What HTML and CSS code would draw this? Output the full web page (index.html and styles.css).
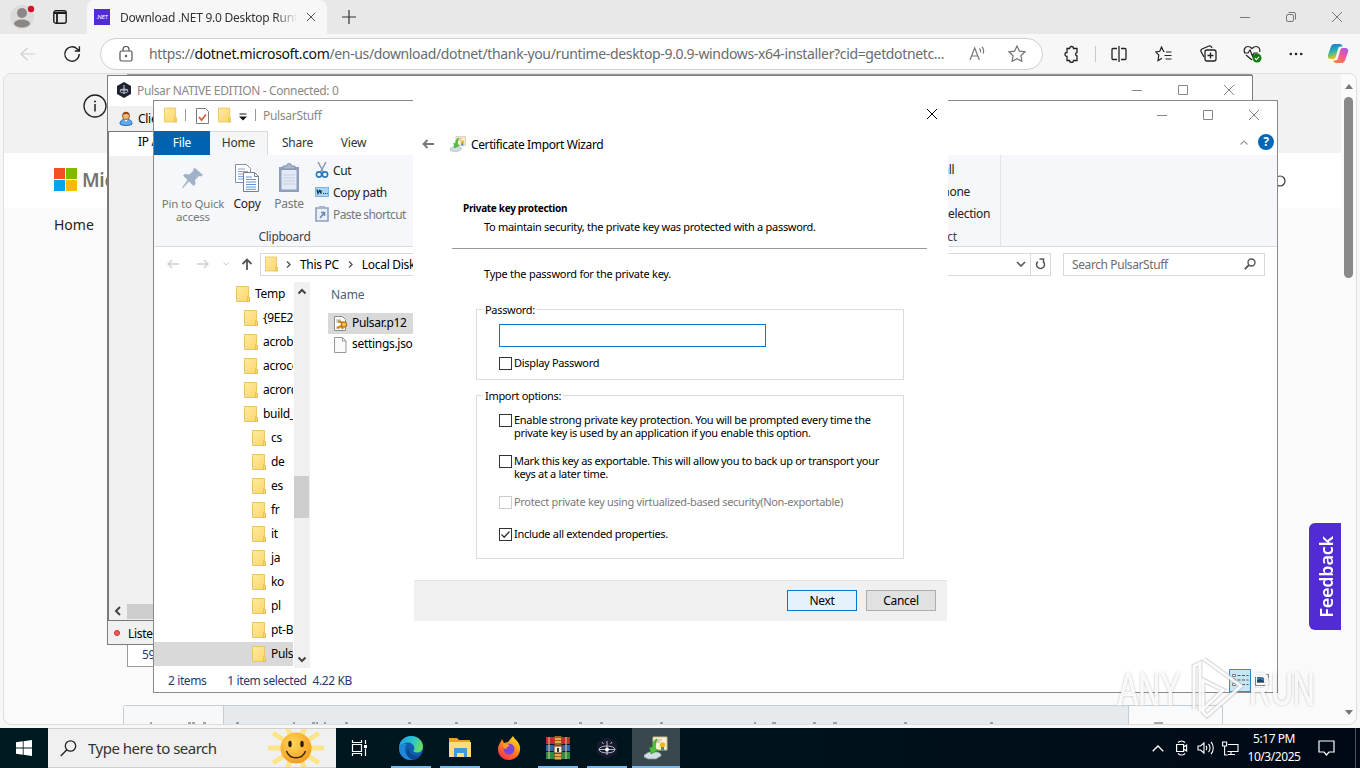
FILE: index.html
```html
<!DOCTYPE html>
<html lang="en">
<head>
  <meta charset="UTF-8">
  <meta name="viewport" content="width=device-width, initial-scale=1.0">
  <title>Desktop</title>
  <link rel="stylesheet" href="styles.css">
</head>
<body>
  <!-- Shared icons -->
  <svg class="defs" width="0" height="0">
    <defs>
      <linearGradient id="gFolder" x1="0" y1="0" x2="1" y2="1"><stop offset="0" stop-color="#ffe9a3"/><stop offset="1" stop-color="#fbd567"/></linearGradient>
      <linearGradient id="gEdge" x1="0" y1="0" x2="1" y2="0.3"><stop offset="0" stop-color="#1b9de2"/><stop offset="0.6" stop-color="#2bc3d2"/><stop offset="1" stop-color="#62dc67"/></linearGradient>
      <linearGradient id="gFox" x1="0.8" y1="0" x2="0.2" y2="1"><stop offset="0" stop-color="#ffe226"/><stop offset="0.45" stop-color="#ff8a16"/><stop offset="1" stop-color="#ff2a55"/></linearGradient>
      <linearGradient id="gCopA" x1="0" y1="0" x2="0.3" y2="1"><stop offset="0" stop-color="#1a6ee0"/><stop offset="0.55" stop-color="#2bb3a8"/><stop offset="1" stop-color="#f2c320"/></linearGradient>
      <linearGradient id="gCopB" x1="1" y1="0" x2="0.3" y2="1"><stop offset="0" stop-color="#9a5bf0"/><stop offset="0.5" stop-color="#ea5a9c"/><stop offset="1" stop-color="#fd7a45"/></linearGradient>
      <radialGradient id="gSun" cx="0.4" cy="0.35" r="0.7"><stop offset="0" stop-color="#ffd75a"/><stop offset="1" stop-color="#f39a1c"/></radialGradient>
      <symbol id="folder" viewBox="0 0 14 16"><path d="M.5.5h12v10l1 1v4H.5z" fill="url(#gFolder)" stroke="#e9c766"/><path d="M11.5 10.5v5h2v-4z" fill="#f7d774" stroke="#dfb94f" stroke-width=".7"/></symbol>
      <symbol id="min" viewBox="0 0 12 12"><path d="M1 6.5h10" stroke="currentColor" fill="none"/></symbol>
      <symbol id="max" viewBox="0 0 12 12"><path d="M1.500 1.500h9v9h-9z" stroke="currentColor" fill="none"/></symbol>
      <symbol id="close" viewBox="0 0 12 12"><path d="M1 1l10 10M11 1L1 11" stroke="currentColor" fill="none"/></symbol>
      <symbol id="cert" viewBox="0 0 24 24"><path d="M9 1h14v13H9z" fill="#f6f1d8" stroke="#c9b987"/><path d="M11 4h7M11 6h5" stroke="#b3a678"/><circle cx="18.500" cy="9" r="2.700" fill="#f0b429"/><path d="M17 11v4l1.500-1 1.500 1v-4z" fill="#4c7fd0"/><path d="M0 19l5-3h9l3 2v2l-5 3H4l-4-2z" fill="#d3dee0" stroke="#7c9297" stroke-width=".7"/><path d="M13 3C9 5 8 8 8.500 11.500l-3-.5 1.500 7 7-4-2.500-1C11 10 11.500 6 13 3z" fill="#4fc23a" stroke="#2c8d23" stroke-width=".6"/></symbol>
    </defs>
  </svg>

  <!-- Browser -->
  <div class="browser">
    <div class="tab-strip">
      <svg class="avatar" width="26" height="26" viewBox="0 0 26 26"><circle cx="12" cy="13" r="12" fill="#dcdbda"/><circle cx="12" cy="9" r="5" fill="#8b8784"/><ellipse cx="12" cy="19.500" rx="8" ry="4" fill="#8b8784"/><circle cx="21" cy="5" r="3.200" fill="#d4102b"/></svg>
      <svg class="tab-actions" width="14" height="14" viewBox="0 0 14 14"><rect x=".8" y=".8" width="12.400" height="12.400" rx="2" fill="none" stroke="#1b1b1b" stroke-width="1.400"/><path d="M1 3h12M4 3v10" stroke="#1b1b1b" stroke-width="1.800"/></svg>
      <div class="tab">
        <span class="net-logo">.NET</span>
        <span class="tab-title">Download .NET 9.0 Desktop Runtime</span>
        <svg width="10" height="10" viewBox="0 0 12 12" class="tab-close"><use href="#close"/></svg>
      </div>
      <svg class="new-tab" width="14" height="14" viewBox="0 0 14 14"><path d="M7 0v14M0 7h14" stroke="#333" stroke-width="1.200"/></svg>
      <div class="win-controls browser-controls">
        <svg width="12" height="12"><use href="#min"/></svg>
        <svg width="12" height="12" viewBox="0 0 12 12"><rect x="1.500" y="3.500" width="7" height="7" rx="1.500" fill="none" stroke="#777"/><path d="M3.500 1.500H9a1.500 1.500 0 0 1 1.500 1.500v5.500" fill="none" stroke="#777"/></svg>
        <svg width="12" height="12"><use href="#close"/></svg>
      </div>
    </div>
    <div class="toolbar">
      <svg class="nav-back" width="16" height="14" viewBox="0 0 16 14"><path d="M15.500 7H1M7.500 .8L1 7l6.500 6.200" fill="none" stroke="#cfcfcf" stroke-width="1.200"/></svg>
      <svg class="nav-reload" width="18" height="18" viewBox="0 0 18 18"><path d="M16.200 9a7.200 7.200 0 1 1-2-5l2 2M16.400 1.300V6h-4.700" fill="none" stroke="#222" stroke-width="1.400"/></svg>
      <div class="url-bar">
        <svg width="14" height="16" viewBox="0 0 14 16"><rect x="1" y="5" width="12" height="10" rx="1.500" fill="none" stroke="#555" stroke-width="1.200"/><path d="M4 5V3.500a3 3 0 0 1 6 0V5" fill="none" stroke="#555" stroke-width="1.200"/><circle cx="7" cy="10" r="1.200" fill="#555"/></svg>
        <span class="url">https://<b>dotnet.microsoft.com</b>/en-us/download/dotnet/thank-you/runtime-desktop-9.0.9-windows-x64-installer?cid=getdotnetc...</span>
        <svg class="read-aloud" width="17" height="16" viewBox="0 0 17 16"><path d="M1 14L5.700 2l4.700 12M2.600 10h6.200M10.500 2.500c1 1 1.400 2.300 1 3.800M13 .8c1.700 2 2 4.200 1.200 6.700" fill="none" stroke="#777" stroke-width="1.200"/></svg>
        <svg class="fav" width="18" height="17" viewBox="0 0 18 17"><path d="M9 1l2.400 5.100 5.600.7-4.100 3.900 1 5.600L9 13.600l-4.900 2.700 1-5.600L1 6.800l5.600-.7z" fill="none" stroke="#777" stroke-width="1.200"/></svg>
      </div>
      <div class="toolbar-icons">
        <svg class="ic-ext" width="17" height="18" viewBox="0 0 17 18"><path d="M4 3.500h2.500a2 2 0 0 1 4 0H14v4a1.800 1.800 0 0 0 0 3.500v4.500h-3.500a2 2 0 0 1-4 0H4V11.500a2 2 0 0 1 0-4z" fill="none" stroke="#222" stroke-width="1.300"/></svg>
        <span class="tb-sep"></span>
        <svg class="ic-split" width="16" height="16" viewBox="0 0 16 16"><path d="M6 2.500H2a1 1 0 0 0-1 1v9a1 1 0 0 0 1 1h4M10 2.500h4a1 1 0 0 1 1 1v9a1 1 0 0 1-1 1h-4M8 0v16" fill="none" stroke="#222" stroke-width="1.300"/></svg>
        <svg class="ic-favs" width="17" height="16" viewBox="0 0 17 16"><path d="M9.500 5.500L8.500 5.300 6.500 1 4.800 5.300.8 6l3 3.200L3 14.500l4-2.300M11 6h5.500M9.500 9.500h7M10.500 13h6" fill="none" stroke="#222" stroke-width="1.200"/></svg>
        <svg class="ic-coll" width="17" height="17" viewBox="0 0 17 17"><path d="M4 12L1 6.500A2 2 0 0 1 2 4l7-3a2 2 0 0 1 2.500 1L12 3" fill="none" stroke="#222" stroke-width="1.300"/><rect x="5" y="5" width="11" height="11" rx="2" fill="none" stroke="#222" stroke-width="1.300"/><path d="M10.500 7.500v6M7.500 10.500h6" stroke="#222" stroke-width="1.300"/></svg>
        <svg class="ic-health" width="19" height="18" viewBox="0 0 19 18"><path d="M2 8C0 5 2 1.500 5 1.500c2 0 3 1 4 2 1-1 2-2 4-2 3 0 4.500 3 3.500 5.500M3 10l6 5M1 8h4l2-3 2.500 6L11 8h4" fill="none" stroke="#222" stroke-width="1.200"/><circle cx="14" cy="13" r="4.500" fill="#107c10"/><path d="M11.800 13l1.600 1.600 2.800-3" fill="none" stroke="#fff" stroke-width="1.100"/></svg>
        <svg class="ic-more" width="14" height="4" viewBox="0 0 14 4"><g fill="#222"><circle cx="1.800" cy="2" r="1.300"/><circle cx="7" cy="2" r="1.300"/><circle cx="12.200" cy="2" r="1.300"/></g></svg>
        <svg class="ic-copilot" width="22" height="21" viewBox="0 0 22 21"><path d="M13 1H7.500C5 1 4 3 3.300 5.500L1 12c-.8 3 1 4 3 4h2.500c1.200 0 2-1 2.400-2.400L11 6c.6-2 1.400-2.500 3.500-2.500h1.200C15 2 14.500 1 13 1z" fill="url(#gCopA)"/><path d="M9 20h5.500c2.500 0 3.500-2 4.200-4.500L21 9c.8-3-1-4-3-4h-2.500c-1.200 0-2 1-2.400 2.400L11 15c-.6 2-1.400 2.500-3.500 2.500H6.300C7 19 7.500 20 9 20z" fill="url(#gCopB)"/></svg>
      </div>
    </div>
    <div class="page">
      <div class="page-main">
        <div class="notice">
          <svg width="24" height="24" viewBox="0 0 24 24"><circle cx="12" cy="12" r="11" fill="none" stroke="#222" stroke-width="1.300"/><circle cx="12" cy="7.500" r="1" fill="#222"/><path d="M12 10v7.500" stroke="#222" stroke-width="1.500"/></svg>
        </div>
        <div class="site-header">
          <div class="ms-logo"><i></i><i></i><i></i><i></i></div>
          <span class="ms-name">Microsoft</span>
          <svg class="site-search" width="14" height="14" viewBox="0 0 14 14"><circle cx="7" cy="7" r="5" fill="none" stroke="#333" stroke-width="1.200"/></svg>
        </div>
        <div class="site-nav">Home</div>
        <div class="site-table">
          <div class="cell-a"></div><div class="cell-b"></div><div class="cell-c"></div>
          <svg class="cell-marks" width="1098" height="3" viewBox="0 0 1098 3"><path d="M26 2h2M64 2h3M68 2h3M79 2h3M112 2h3M169 2h2M188 2h3M192 2h2M200 2h2M221 2h3M284 2h3M331 2h3M390 2h3M455 2h3M476 2h3M536 2h3M630 2h2M648 2h4M689 2h3M709 2h4M780 2h3M866 2h3M1030 2h9" stroke="#555" stroke-width="1.200"/></svg>
        </div>
        <div class="feedback"><span>Feedback</span></div>
      </div>
      <div class="page-scroll">
        <i class="tri-up"></i><i class="scroll-thumb"></i><i class="tri-down"></i>
      </div>
    </div>
  </div>

  <!-- Window behind everything -->
  <div class="window back-window"><span>59</span></div>

  <!-- Pulsar -->
  <div class="window pulsar">
    <div class="pulsar-title">
      <svg width="16" height="16" viewBox="0 0 16 16"><path d="M8 0l7 4v8l-7 4-7-4V4z" fill="#1d2330"/><path d="M8 3v9M4 8h8" stroke="#c9d2e2"/><ellipse cx="8" cy="9" rx="4" ry="2" fill="none" stroke="#c9d2e2" stroke-width=".8"/></svg>
      <span>Pulsar NATIVE EDITION - Connected: 0</span>
      <div class="win-controls">
        <svg width="12" height="12"><use href="#min"/></svg>
        <svg width="12" height="12"><use href="#max"/></svg>
        <svg width="12" height="12"><use href="#close"/></svg>
      </div>
    </div>
    <div class="pulsar-tabs">
      <svg width="14" height="15" viewBox="0 0 14 15"><path d="M1 13c0-3 2-5 6-5s6 2 6 5c-2 2-10 2-12 0z" fill="#5fa8ec" stroke="#2d6bb4"/><path d="M5 8l2 3 2-3z" fill="#fff"/><circle cx="7" cy="5" r="3.500" fill="#f3b878" stroke="#a05a22"/><path d="M3.500 4C3.500-.5 10.500-.5 10.500 4 8 2.500 6 2.500 3.500 4z" fill="#8d4a16"/></svg>
      <span>Clients</span>
    </div>
    <div class="pulsar-list">
      <div class="list-head">IP Address</div>
      <div class="list-body"></div>
      <div class="hscroll"><svg width="18" height="16" viewBox="0 0 18 16"><path d="M11 4L7 8l4 4" fill="none" stroke="#444" stroke-width="2"/></svg><i></i></div>
    </div>
    <div class="pulsar-status"><i></i><span>Listening</span></div>
  </div>

  <!-- File Explorer -->
  <div class="window explorer">
    <div class="explorer-title">
      <svg width="13" height="16"><use href="#folder"/></svg>
      <i class="vbar"></i>
      <svg class="check-doc" width="13" height="16" viewBox="0 0 13 16"><path d="M.5.5h9l3 3v12H.500z" fill="#fff" stroke="#7c7c7c"/><path d="M3 9l2.500 3L10 6.500" fill="none" stroke="#d0613b" stroke-width="1.800"/></svg>
      <svg width="13" height="16"><use href="#folder"/></svg>
      <svg class="qat-arrow" width="8" height="8" viewBox="0 0 8 8"><path d="M.5 1h7" stroke="#111"/><path d="M0 3.500h8L4 7.500z" fill="#111"/></svg>
      <i class="vbar"></i>
      <span class="title-text">PulsarStuff</span>
      <div class="win-controls">
        <svg width="12" height="12"><use href="#min"/></svg>
        <svg width="12" height="12"><use href="#max"/></svg>
        <svg width="12" height="12"><use href="#close"/></svg>
      </div>
    </div>
    <div class="ribbon-tabs">
      <span class="rtab rtab-file">File</span>
      <span class="rtab active">Home</span>
      <span class="rtab share">Share</span>
      <span class="rtab view">View</span>
      <div class="ribbon-right">
        <svg width="8" height="5" viewBox="0 0 8 5"><path d="M.5 4.500L4 1l3.500 3.500" fill="none" stroke="#999" stroke-width="1.200"/></svg>
        <span class="help">?</span>
      </div>
    </div>
    <div class="ribbon">
      <div class="clipboard">
        <div class="big-buttons">
          <div class="big pin">
            <svg width="24" height="26" viewBox="0 0 24 26"><path d="M14 3l8 7-2 1.500-2-.5-4 4 .5 4-2 2-4.500-4.500L2 23l-1 .5.5-1.500L6.500 15 2 10.500l2-1.500 4.500.5 4-4L12 4z" fill="#9fb2c8"/></svg>
            <span>Pin to Quick<br>access</span>
          </div>
          <div class="big copy">
            <svg width="26" height="30" viewBox="0 0 26 30"><path d="M1.500 1.500h11l4 4v14h-15z" fill="#fff" stroke="#8291a5"/><path d="M4 6h7M4 8.500h10M4 11h10M4 13.500h10M4 16h10" stroke="#7ca5d8"/><path d="M9.500 9.500h11l4 4v15h-15z" fill="#fff" stroke="#6f8095"/><path d="M20.500 9.500v4h4" fill="none" stroke="#6f8095"/><path d="M12 14h6M12 16.500h10M12 19h10M12 21.500h10M12 24h10M12 26.300h10" stroke="#5b93d6"/></svg>
            <span>Copy</span>
          </div>
          <div class="big paste">
            <svg width="22" height="30" viewBox="0 0 22 30"><path d="M1 4h20v25H1z" fill="#8d9fba"/><path d="M3.500 7h15v19.500h-15z" fill="#e3eaf5"/><path d="M5 6h12V3h-3.500a2.500 2.500 0 0 0-5 0H5z" fill="#a9b7ca" stroke="#8092aa"/><path d="M5 12h12M5 15h12M5 18h12M5 21h12" stroke="#c3cfe1"/></svg>
            <span>Paste</span>
          </div>
          <div class="small-buttons">
            <div><svg width="14" height="16" viewBox="0 0 14 16"><path d="M3 0l5.500 10M11 0L5.500 10" stroke="#8d99a8" stroke-width="1.500"/><circle cx="4" cy="12.500" r="2.600" fill="none" stroke="#2a7ac0" stroke-width="1.600"/><circle cx="10" cy="12.500" r="2.600" fill="none" stroke="#2a7ac0" stroke-width="1.600"/></svg><span>Cut</span></div>
            <div><svg width="14" height="16" viewBox="0 0 14 16"><rect x=".5" y="3.500" width="13" height="9" fill="#a9d4f4" stroke="#7fb4df"/><path d="M2 5.500l1 4 1.500-3 1.500 3V6M8 9.500h1M10 9.500h1M12 9.500h.8" fill="none" stroke="#13334f" stroke-width="1.200"/></svg><span>Copy path</span></div>
            <div class="dim"><svg width="14" height="16" viewBox="0 0 14 16"><path d="M1 2h12v13H1z" fill="#eaf0f8" stroke="#8ea0b8" stroke-width="1.600"/><path d="M4 0h6v3H4z" fill="#a9b7ca"/><path d="M5 12l4-5M6 6.500h3.500V10" fill="none" stroke="#6d86ab" stroke-width="1.500"/></svg><span>Paste shortcut</span></div>
          </div>
        </div>
        <div class="group-name">Clipboard</div>
      </div>
      <div class="select-group">
        <span>Select all</span>
        <span>Select none</span>
        <span>Invert selection</span>
        <div class="group-name">Select</div>
      </div>
    </div>
    <div class="address-row">
      <svg width="12" height="10" viewBox="0 0 12 10"><path d="M12 5H1M5 1L1 5l4 4" fill="none" stroke="#d0d0d0" stroke-width="1.400"/></svg>
      <svg width="12" height="10" viewBox="0 0 12 10"><path d="M0 5h11M7 1l4 4-4 4" fill="none" stroke="#d0d0d0" stroke-width="1.400"/></svg>
      <svg width="6" height="4" viewBox="0 0 6 4"><path d="M.5.5L3 3 5.500.5" fill="none" stroke="#ccc"/></svg>
      <svg width="12" height="12" viewBox="0 0 12 12"><path d="M6 12V1.500M1.500 6L6 1.500 10.500 6" fill="none" stroke="#555" stroke-width="1.800"/></svg>
      <div class="address">
        <svg width="13" height="16"><use href="#folder"/></svg>
        <svg width="5" height="7" viewBox="0 0 5 7"><path d="M1 .5l3 3-3 3" fill="none" stroke="#555" stroke-width="1.400"/></svg>
        <span>This PC</span>
        <svg width="5" height="7" viewBox="0 0 5 7"><path d="M1 .5l3 3-3 3" fill="none" stroke="#555" stroke-width="1.400"/></svg>
        <span>Local Disk (C:)</span>
        <div class="address-end">
          <svg width="10" height="6" viewBox="0 0 10 6"><path d="M1 1l4 4 4-4" fill="none" stroke="#555" stroke-width="1.600"/></svg>
          <i></i>
          <svg width="11" height="12" viewBox="0 0 11 12"><path d="M8.200 3.600a4 4 0 1 1-5.400 0M4.500 1h4v4" fill="none" stroke="#555" stroke-width="1.500"/></svg>
        </div>
      </div>
      <div class="search-box"><span>Search PulsarStuff</span><svg width="12" height="12" viewBox="0 0 12 12"><circle cx="7.500" cy="4.500" r="3.500" fill="none" stroke="#555" stroke-width="1.400"/><path d="M5 7L.8 11.200" stroke="#555" stroke-width="1.800"/></svg></div>
    </div>
    <div class="explorer-body">
      <div class="tree">
        <div class="node l0"><svg width="14" height="16"><use href="#folder"/></svg><span>Temp</span></div>
        <div class="node l1"><svg width="14" height="16"><use href="#folder"/></svg><span>{9EE29C</span></div>
        <div class="node l1"><svg width="14" height="16"><use href="#folder"/></svg><span>acrobat</span></div>
        <div class="node l1"><svg width="14" height="16"><use href="#folder"/></svg><span>acrocef</span></div>
        <div class="node l1"><svg width="14" height="16"><use href="#folder"/></svg><span>acrord</span></div>
        <div class="node l1"><svg width="14" height="16"><use href="#folder"/></svg><span>build_</span></div>
        <div class="node l2"><svg width="14" height="16"><use href="#folder"/></svg><span>cs</span></div>
        <div class="node l2"><svg width="14" height="16"><use href="#folder"/></svg><span>de</span></div>
        <div class="node l2"><svg width="14" height="16"><use href="#folder"/></svg><span>es</span></div>
        <div class="node l2"><svg width="14" height="16"><use href="#folder"/></svg><span>fr</span></div>
        <div class="node l2"><svg width="14" height="16"><use href="#folder"/></svg><span>it</span></div>
        <div class="node l2"><svg width="14" height="16"><use href="#folder"/></svg><span>ja</span></div>
        <div class="node l2"><svg width="14" height="16"><use href="#folder"/></svg><span>ko</span></div>
        <div class="node l2"><svg width="14" height="16"><use href="#folder"/></svg><span>pl</span></div>
        <div class="node l2"><svg width="14" height="16"><use href="#folder"/></svg><span>pt-BR</span></div>
        <div class="node l2 selected"><svg width="14" height="16"><use href="#folder"/></svg><span>PulsarStuff</span></div>
      </div>
      <div class="tree-scroll">
        <svg width="10" height="7" viewBox="0 0 10 7"><path d="M1.500 5.500L5 2l3.500 3.500" fill="none" stroke="#444" stroke-width="2"/></svg>
        <i></i>
        <svg width="10" height="7" viewBox="0 0 10 7"><path d="M1.500 1.500L5 5l3.500-3.500" fill="none" stroke="#444" stroke-width="2"/></svg>
      </div>
      <div class="files">
        <div class="col-name">Name</div>
        <div class="file-row selected"><svg width="15" height="16" viewBox="0 0 15 16"><path d="M1.500.5h8l3 3v11h-11z" fill="#fff" stroke="#8c8c8c"/><path d="M3 4h5M3 6h4M3 12h4" stroke="#aaa"/><path d="M5 5l6 2.500M4 12l4-2 2 3" stroke="#c88616" stroke-width="2" fill="none"/><circle cx="11" cy="8.500" r="2.600" fill="#f4c24e" stroke="#b87410" stroke-width="1.200"/></svg><span>Pulsar.p12</span></div>
        <div class="file-row"><svg width="15" height="16" viewBox="0 0 15 16"><path d="M1.500.5h8l3.500 3.500v11.500H1.500z" fill="#fafafa" stroke="#999"/><path d="M9.500.5V4H13" fill="none" stroke="#999"/></svg><span>settings.json</span></div>
      </div>
    </div>
    <div class="explorer-status">
      <span class="st-items">2 items</span>
      <span class="st-selected">1 item selected</span>
      <span class="st-size">4.22 KB</span>
      <div class="view-modes">
        <span class="view-on"><svg width="18" height="14" viewBox="0 0 18 14"><path d="M1.500 1.500h3v2h-3zM1.500 6h3v2h-3zM1.500 10.500h3v2h-3z" fill="#fff" stroke="#777"/><path d="M6.500 2.500h3M6.500 7h3M6.500 11.500h3M11 2.500h3M11 7h3M11 11.500h3M15.500 2.500h2M15.500 7h2M15.500 11.500h2" stroke="#555"/></svg></span>
        <svg width="14" height="12" viewBox="0 0 14 12"><path d="M.5.5h13v11H.500z" fill="#fff" stroke="#888"/><path d="M2 2.500h7v6H2z" fill="#3b7fb8"/><path d="M2 6.500l3-1.500 4 2v1.500H2z" fill="#25435f"/><path d="M10.500 3h2M10.500 5.500h2M10.500 8h2" stroke="#777"/></svg>
      </div>
    </div>
  </div>

  <!-- Certificate Import Wizard -->
  <div class="window wizard">
    <div class="wizard-close"><svg width="12" height="12"><use href="#close"/></svg></div>
    <div class="wizard-title">
      <svg width="12" height="10" viewBox="0 0 12 10"><path d="M12 5H1.500M5.500 1l-4 4 4 4" fill="none" stroke="#777" stroke-width="1.800"/></svg>
      <svg width="16" height="16"><use href="#cert"/></svg>
      <span>Certificate Import Wizard</span>
    </div>
    <div class="wizard-head">
      <h3>Private key protection</h3>
      <p>To maintain security, the private key was protected with a password.</p>
    </div>
    <div class="wizard-body">
      <p>Type the password for the private key.</p>
      <fieldset class="box-password">
        <legend>Password:</legend>
        <div class="pw-input"></div>
        <div class="option"><i class="check"></i><span>Display Password</span></div>
      </fieldset>
      <fieldset class="box-options">
        <legend>Import options:</legend>
        <div class="option"><i class="check"></i><span>Enable strong private key protection. You will be prompted every time the<br>private key is used by an application if you enable this option.</span></div>
        <div class="option"><i class="check"></i><span>Mark this key as exportable. This will allow you to back up or transport your<br>keys at a later time.</span></div>
        <div class="option disabled"><i class="check"></i><span>Protect private key using virtualized-based security(Non-exportable)</span></div>
        <div class="option"><i class="check"><svg width="11" height="11" viewBox="0 0 11 11"><path d="M1.500 5.500l2.700 2.800L9.500 2.500" fill="none" stroke="#333" stroke-width="1.300"/></svg></i><span>Include all extended properties.</span></div>
      </fieldset>
    </div>
    <div class="wizard-foot">
      <span class="btn primary">Next</span>
      <span class="btn">Cancel</span>
    </div>
  </div>

  <!-- Watermark -->
  <div class="watermark">
    <span class="wm-any">ANY</span>
    <svg width="54" height="66" viewBox="0 0 54 66"><path d="M4 53V10l6-3v48M14 3l37 27-34 30-4-4V24l20 10-22 21" fill="none" stroke="#bbb" stroke-width="5" opacity=".5"/><path d="M4 53V10l6-3v48M14 3l37 27-34 30-4-4V24l20 10-22 21" fill="none" stroke="#fff" stroke-width="2.600" opacity=".9"/></svg>
    <span class="wm-run">RUN</span>
  </div>

  <!-- Taskbar -->
  <div class="taskbar">
    <div class="start"><svg width="16" height="16" viewBox="0 0 16 16"><path d="M0 2.300l6.800-1v6.300H0zM7.600 1.200L16 0v7.600H7.600zM0 8.400h6.800v6.300L0 13.700zM7.600 8.400H16V16l-8.400-1.200z" fill="#fff"/></svg></div>
    <div class="task-search">
      <svg width="17" height="17" viewBox="0 0 17 17"><circle cx="10.500" cy="6" r="5.200" fill="none" stroke="#222" stroke-width="1.300"/><path d="M6.800 9.800L.8 16" stroke="#222" stroke-width="1.400"/></svg>
      <span>Type here to search</span>
      <svg class="sun" width="60" height="38" viewBox="0 0 60 38"><g stroke="#fbe588" stroke-width="5"><path d="M2 19h56M7 4l46 30M53 4L7 34M20-4l20 46M40-4L20 42"/></g><circle cx="30" cy="19" r="15.500" fill="url(#gSun)"/><ellipse cx="24" cy="15" rx="1.700" ry="3.200" fill="#2b1b05"/><ellipse cx="36" cy="15" rx="1.700" ry="3.200" fill="#2b1b05"/><path d="M20.500 22c3 9 16 9 19 0" fill="none" stroke="#3a2405" stroke-width="1.400"/></svg>
    </div>
    <div class="task task-view"><svg width="18" height="16" viewBox="0 0 18 16"><path d="M1.500 0v2.500h9V0M1.500 16v-2.500h9V16M1.500 4.500h9v7h-9zM14.500 0v4M14.500 8.500V16" fill="none" stroke="#fff" stroke-width="1.200"/><path d="M13 5h3v3h-3z" fill="#fff"/></svg></div>
    <div class="task open"><svg width="24" height="24" viewBox="0 0 24 24"><circle cx="12" cy="12" r="12" fill="#0f5eb0"/><path d="M0 11C1 4 6 0 12 0c7 0 12 5 12 10.500 0 4-3 6-6 6-2.500 0-4-1-3.500-2 .8-1 .8-1.500.8-2.500C15 8 11 6 8 6.500 4 7 1 9 0 11z" fill="url(#gEdge)"/><path d="M8 8c-4 4-2 13 6 15.800C5 25 0 19 0 12c1-4 4-5 8-4z" fill="#1f88d8"/><path d="M10 12c-1 4 3 8 8 8 1.500 0 3-.4 4-1-2 3-5 5-8 4.800C7 22 6 14 10 12z" fill="#0b4a93"/></svg></div>
    <div class="task open"><svg width="24" height="20" viewBox="0 0 24 20"><path d="M1 0h8l2 2h11v17H1z" fill="#e7a321"/><path d="M1 4h22v15H1z" fill="#fcdc7c"/><path d="M6 10h13v9h-3v-4h-7v4H6z" fill="#3d9bdc"/></svg></div>
    <div class="task"><svg width="24" height="24" viewBox="0 0 24 24"><path d="M5 3l2 4 4-1 5-6c1 3 6 5 7 11 1 7-4 13-11 13S1 19 1 13c0-4 2-5 4-10z" fill="url(#gFox)"/><circle cx="12" cy="13" r="5.500" fill="#7b45d9"/><path d="M6 8c3-1 5 0 7 2-2 0-3 1-4 3-2 0-3-2-3-5z" fill="#ff9a1f"/></svg></div>
    <div class="task open"><svg width="24" height="24" viewBox="0 0 24 24"><path d="M0 1h24v7H0z" fill="#c22a35"/><path d="M0 9h24v6H0z" fill="#3465b4"/><path d="M0 16h24v7H0z" fill="#2e8b46"/><path d="M3 1v22M20 1v22" stroke="#e6cd8c"/><path d="M8.500 0h7v24h-7z" fill="#a55a1e"/><path d="M9 3h6M9 6h6M9 19h6M9 22h6" stroke="#f2c761" stroke-width="1.400"/><rect x="8" y="10" width="8" height="7" fill="#f5ead1" stroke="#5c3a17"/><path d="M12 12v4" stroke="#333" stroke-width="2"/></svg></div>
    <div class="task open"><svg width="22" height="22" viewBox="0 0 22 22"><path d="M11 0l10 5.500v11L11 22 1 16.500v-11z" fill="#151a2c"/><ellipse cx="11" cy="12.500" rx="8" ry="3.500" fill="none" stroke="#b9bfd0"/><path d="M11 4v14M6 5l1.500 2M16 5l-1.500 2M3 12.500h16" stroke="#e4e8f2" stroke-width=".8"/><circle cx="11" cy="12.500" r="2" fill="#fff"/></svg></div>
    <div class="task open current"><svg width="24" height="24"><use href="#cert"/></svg></div>
    <div class="tray">
      <svg class="tray-up" width="12" height="7" viewBox="0 0 12 7"><path d="M.7 6.300L6 1l5.300 5.300" fill="none" stroke="#fff" stroke-width="1.300"/></svg>
      <svg class="tray-meet" width="12" height="16" viewBox="0 0 12 16"><path d="M.6 4.500h7v7h-7zM7.600 7l3-2v6l-3-2M2 2.500c2-2 5-2 7 0M2 13.500c2 2 5 2 7 0" fill="none" stroke="#fff" stroke-width="1.200"/></svg>
      <svg class="tray-sound" width="17" height="14" viewBox="0 0 17 14"><path d="M1 5h2.500L7 2v10L3.500 9H1zM9 5c1 1 1 3 0 4M11.500 3c2 2 2 6 0 8M14 1c3 3 3 9 0 12" fill="none" stroke="#fff" stroke-width="1.100"/></svg>
      <svg class="tray-net" width="17" height="15" viewBox="0 0 17 15"><path d="M6 3.500h10v7H5.500M9 11v3M6 13.500h7M.6 1h4v4h-4zM2.600 5v9h3" fill="none" stroke="#fff" stroke-width="1.100"/></svg>
      <div class="clock"><span>5:17 PM</span><span>10/3/2025</span></div>
      <svg class="action" width="17" height="16" viewBox="0 0 17 16"><path d="M1 1h15v11h-5l-2.500 3L6 12H1z" fill="none" stroke="#fff" stroke-width="1.200"/></svg>
      <i class="show-desktop"></i>
    </div>
  </div>
</body>
</html>
```
FILE: styles.css
```css
* {
  box-sizing: border-box;
}

body {
  margin: 0;
  width: 1360px;
  height: 768px;
  overflow: hidden;
  position: relative;
  font-family: "Noto Sans", "Open Sans", sans-serif;
  font-size: 12px;
  letter-spacing: -0.3px;
  color: #000;
  background-color: #f7f7f7;
}

svg {
  display: block;
  flex: none;
}

span {
  white-space: nowrap;
}

.defs {
  position: absolute;
}

/* Browser */
.browser {
  height: 728px;
  display: flex;
  flex-direction: column;
  background-color: #f7f7f7;
}

.tab-strip {
  height: 34px;
  flex: none;
  display: flex;
  align-items: center;
  background-color: #e8e8e8;
}

.avatar {
  margin: 0 0 0 10px;
}

.tab-actions {
  margin-left: 17px;
}

.tab {
  width: 240px;
  height: 34px;
  margin-left: 20px;
  padding: 0 11px 0 7px;
  display: flex;
  align-items: center;
  background-color: #f7f7f7;
  border-radius: 8px 8px 0 0;
}

.net-logo {
  width: 16px;
  height: 16px;
  background-color: #512bd4;
  color: #fff;
  font-size: 6px;
  line-height: 16px;
  text-align: center;
}

.tab-title {
  width: 178px;
  margin-left: 10px;
  overflow: hidden;
  color: #333;
  letter-spacing: -0.25px;
  -webkit-mask-image: linear-gradient(90deg, #000 88%, transparent);
  mask-image: linear-gradient(90deg, #000 88%, transparent);
}

.tab-close {
  margin-left: 9px;
  color: #333;
}

.new-tab {
  margin-left: 15px;
}

.win-controls {
  margin-left: auto;
  display: flex;
  gap: 34px;
  padding-right: 17px;
  color: #888;
}

.browser-controls {
  color: #777;
}

.toolbar {
  height: 39px;
  flex: none;
  display: flex;
  align-items: center;
}

.nav-back {
  margin-left: 20px;
}

.nav-reload {
  margin-left: 27px;
}

.url-bar {
  width: 943px;
  height: 32px;
  margin-left: 19px;
  padding: 0 16px 0 18px;
  display: flex;
  align-items: center;
  border: 1px solid #d0d0d0;
  border-radius: 16px;
  background-color: #fff;
}

.url {
  width: 806px;
  margin-left: 16px;
  font-size: 14px;
  letter-spacing: -0.35px;
  color: #6b6b6b;
}

.url b {
  font-weight: normal;
  color: #111;
}

.read-aloud {
  margin-left: 15px;
}

.fav {
  margin-left: 22px;
}

.toolbar-icons {
  flex: 1;
  display: flex;
  align-items: center;
}

.ic-ext {
  margin-left: 20px;
}

.tb-sep {
  width: 1px;
  height: 16px;
  margin-left: 15px;
  background-color: #c9c9c9;
}

.ic-split {
  margin-left: 15px;
}

.ic-favs {
  margin-left: 28px;
}

.ic-coll {
  margin-left: 28px;
}

.ic-health {
  margin-left: 26px;
}

.ic-more {
  margin-left: 27px;
}

.ic-copilot {
  margin-left: 24px;
}

.page {
  flex: 1;
  margin: 0 3px 3px;
  border: 1px solid #dedede;
  border-radius: 8px;
  overflow: hidden;
  display: flex;
  background-color: #fafafa;
}

.page-main {
  width: 1337px;
  position: relative;
  display: flex;
  flex-direction: column;
}

.notice {
  height: 79px;
  padding: 20px 79px;
  background-color: #f2f2f2;
}

.site-header {
  height: 55px;
  padding: 0 54px 0 50px;
  display: flex;
  align-items: center;
  background-color: #fff;
}

.ms-logo {
  display: grid;
  grid-template-columns: 11px 11px;
  gap: 1px;
  margin-top: -3px;
}

.ms-logo i {
  height: 11px;
  background-color: #f25022;
}

.ms-logo i:nth-child(2) {
  background-color: #7fba00;
}

.ms-logo i:nth-child(3) {
  background-color: #00a4ef;
}

.ms-logo i:nth-child(4) {
  background-color: #ffb900;
}

.ms-name {
  margin: -1px 0 0 5px;
  font-size: 19px;
  font-weight: 600;
  color: #737373;
}

.site-search {
  margin-left: auto;
}

.site-nav {
  padding: 7px 50px;
  font-size: 14px;
  letter-spacing: 0;
  color: #222;
}

.site-table {
  width: 1100px;
  height: 19px;
  margin: auto 0 0 119px;
  position: relative;
  display: flex;
  border: 1px solid #c3cdd5;
  border-bottom: 0;
  border-radius: 3px 3px 0 0;
}

.cell-a {
  width: 100px;
  background-color: #f7f8f9;
  border-right: 1px solid #c3cdd5;
}

.cell-b {
  flex: 1;
  background-color: #e6eaed;
}

.cell-c {
  width: 94px;
  border-left: 1px solid #c3cdd5;
}

.cell-marks {
  position: absolute;
  left: 0;
  bottom: 0;
}

.feedback {
  position: absolute;
  right: 0;
  top: 449px;
  width: 32px;
  height: 107px;
  display: flex;
  align-items: center;
  justify-content: center;
  background-color: #512bd4;
  border-radius: 6px 0 0 6px;
}

.feedback span {
  writing-mode: vertical-rl;
  transform: rotate(180deg);
  margin-right: -2px;
  color: #fff;
  font-size: 18px;
  font-weight: 600;
  letter-spacing: -0.2px;
}

.page-scroll {
  flex: 1;
  padding: 10px 0 9px;
  display: flex;
  flex-direction: column;
  align-items: center;
}

.tri-up,
.tri-down {
  border: 4px solid transparent;
}

.tri-up {
  border-top: 0;
  border-bottom: 5px solid #777;
}

.tri-down {
  margin-top: auto;
  border-bottom: 0;
  border-top: 5px solid #777;
}

.scroll-thumb {
  width: 9px;
  height: 181px;
  margin-top: 8px;
  border-radius: 5px;
  background-color: #8a8a8a;
}

/* Windows */
.window {
  position: absolute;
  display: flex;
  flex-direction: column;
  overflow: hidden;
  background-color: #fff;
}

.back-window {
  left: 127px;
  top: 74px;
  width: 1125px;
  height: 593px;
  border: 1px solid #999;
  justify-content: flex-end;
  padding: 0 0 3px 14px;
  color: #1e3c70;
}

.pulsar {
  left: 107px;
  top: 75px;
  width: 1146px;
  height: 570px;
  border: 1px solid #7c7c7c;
}

.pulsar-title {
  height: 30px;
  display: flex;
  align-items: center;
  padding: 0 0 2px 8px;
  color: #8a8a8a;
}

.pulsar-title span {
  margin-left: 5px;
  letter-spacing: -0.37px;
}

.pulsar-tabs {
  height: 25px;
  display: flex;
  align-items: center;
  padding-left: 11px;
  gap: 5px;
  background-color: #f0f0f0;
}

.pulsar-list {
  flex: 1;
  display: flex;
  flex-direction: column;
  border: 1px solid #777;
  border-width: 1px 0 1px 1px;
}

.list-head {
  height: 24px;
  padding: 1px 0 0 29px;
}

.list-body {
  flex: 1;
  background-color: #f0f0f0;
}

.hscroll {
  height: 18px;
  display: flex;
  align-items: center;
  background-color: #f0f0f0;
}

.hscroll i {
  width: 900px;
  height: 15px;
  background-color: #cdcdcd;
}

.pulsar-status {
  height: 23px;
  display: flex;
  align-items: center;
  padding: 2px 0 0 6px;
  gap: 8px;
  background-color: #f0f0f0;
}

.pulsar-status i {
  width: 6px;
  height: 6px;
  margin-bottom: 2px;
  border-radius: 3px;
  background-color: #f25a5a;
  border: 1px solid #d92b2b;
}

/* Explorer */
.explorer {
  left: 153px;
  top: 100px;
  width: 1125px;
  height: 593px;
  border: 1px solid #8a8a8a;
}

.explorer-title {
  height: 30px;
  display: flex;
  align-items: center;
  padding: 0 0 2px 10px;
  color: #8a8a8a;
}

.vbar {
  width: 1px;
  height: 12px;
  margin-left: 8px;
  background-color: #999;
}

.check-doc {
  margin: 2px 9px 0 10px;
}

.qat-arrow {
  margin: 4px 0 0 8px;
}

.title-text {
  margin-left: 7px;
}

.ribbon-tabs {
  height: 24px;
  display: flex;
  align-items: center;
}

.rtab {
  height: 24px;
  line-height: 24px;
  text-align: center;
  letter-spacing: -0.2px;
  color: #333;
}

.rtab-file {
  width: 56px;
  color: #fff;
  background-color: #0063b1;
}

.rtab.active {
  width: 58px;
  line-height: 22px;
  background-color: #f5f6f7;
  border: 1px solid #dadbdc;
  border-width: 1px 1px 0 0;
}

.rtab.share {
  width: 59px;
}

.rtab.view {
  width: 53px;
}

.ribbon-right {
  margin-left: auto;
  display: flex;
  align-items: center;
  gap: 10px;
  padding: 0 3px 2px 0;
}

.help {
  width: 16px;
  height: 16px;
  border-radius: 8px;
  background-color: #0067b8;
  color: #fff;
  font-weight: bold;
  line-height: 16px;
  text-align: center;
}

.ribbon {
  height: 92px;
  flex: none;
  display: flex;
  border-bottom: 1px solid #dadbdc;
  background-color: #f5f7fa;
  color: #222;
}

.clipboard {
  width: 261px;
  flex: none;
}

.big-buttons {
  display: flex;
  height: 74px;
}

.big {
  display: flex;
  flex-direction: column;
  align-items: center;
}

.big span {
  text-align: center;
  line-height: 13px;
}

.big.pin {
  width: 78px;
  padding-top: 10px;
  gap: 6px;
  color: #777;
  font-size: 11.5px;
  letter-spacing: -0.2px;
}

.big.copy {
  width: 30px;
  padding-top: 8px;
  gap: 4px;
}

.big.paste {
  width: 54px;
  padding-top: 8px;
  gap: 4px;
  color: #777;
}

.small-buttons {
  padding-top: 4px;
  letter-spacing: -0.35px;
}

.small-buttons div {
  height: 22px;
  display: flex;
  align-items: center;
  gap: 4px;
  margin-left: -1px;
}

.small-buttons .dim {
  color: #777;
  letter-spacing: -0.6px;
}

.group-name {
  line-height: 16px;
  text-align: center;
  color: #444;
}

.select-group {
  width: 93px;
  margin-left: 493px;
  padding: 4px 0 0 0;
  display: flex;
  flex-direction: column;
  border-right: 1px solid #e2e3e5;
}

.select-group span {
  height: 22px;
  line-height: 22px;
}

.select-group .group-name {
  margin: 4px 26px 0 0;
}

.address-row {
  height: 35px;
  flex: none;
  display: flex;
  align-items: center;
  padding: 0 0 1px 13px;
}

.address-row > svg:nth-child(2) {
  margin-left: 18px;
}

.address-row > svg:nth-child(3) {
  margin-left: 14px;
}

.address-row > svg:nth-child(4) {
  margin-left: 12px;
}

.address {
  width: 791px;
  height: 23px;
  margin-left: 7px;
  padding-left: 4px;
  display: flex;
  align-items: center;
  gap: 9px;
  border: 1px solid #d9d9d9;
}

.address > svg:first-child {
  margin-right: -1px;
}

.address-end {
  margin-left: auto;
  height: 21px;
  display: flex;
  align-items: center;
  gap: 4px;
  padding-right: 4px;
}

.address-end i {
  width: 1px;
  height: 21px;
  background-color: #d9d9d9;
}

.search-box {
  width: 202px;
  height: 23px;
  margin-left: 12px;
  padding: 0 8px;
  display: flex;
  align-items: center;
  justify-content: space-between;
  border: 1px solid #d9d9d9;
  color: #6d6d6d;
  letter-spacing: -0.4px;
}

.explorer-body {
  height: 386px;
  flex: none;
  display: flex;
}

.tree {
  width: 139px;
}

.node {
  height: 24px;
  display: flex;
  align-items: center;
  gap: 5px;
  overflow: hidden;
}

.node span,
.file-row span {
  margin-top: -2px;
}

.node.l0 {
  padding-left: 82px;
}

.node.l1 {
  padding-left: 90px;
}

.node.l2 {
  padding-left: 98px;
}

.node.selected,
.file-row.selected {
  background-color: #d9d9d9;
}

.tree-scroll {
  width: 16px;
  margin-left: 1px;
  padding: 6px 1px 5px 0;
  display: flex;
  flex-direction: column;
  align-items: center;
  background-color: #f0f0f0;
}

.tree-scroll i {
  width: 15px;
  height: 42px;
  margin: 181px 0 auto;
  background-color: #cdcdcd;
}

.files {
  padding: 4px 0 0 18px;
}

.col-name {
  height: 27px;
  padding-left: 3px;
  letter-spacing: -0.1px;
  color: #4c607a;
}

.file-row {
  height: 21px;
  width: 300px;
  display: flex;
  align-items: center;
  gap: 4px;
  padding-left: 5px;
}

.explorer-status {
  flex: 1;
  display: flex;
  align-items: center;
  padding-left: 14px;
  color: #1e3c70;
  letter-spacing: -0.4px;
}

.st-selected {
  margin-left: 21px;
}

.st-size {
  margin-left: 6px;
}

.view-modes {
  margin-left: auto;
  display: flex;
  align-items: center;
  gap: 4px;
  padding-right: 8px;
}

.view-on {
  width: 22px;
  height: 23px;
  display: flex;
  align-items: center;
  justify-content: center;
  border: 1px solid #3a8ebd;
  background-color: #c5e6f5;
}

/* Wizard */
.wizard {
  left: 413px;
  top: 98px;
  width: 535px;
  height: 524px;
  padding: 0 1px 1px;
  font-size: 11px;
  letter-spacing: -0.31px;
}

.wizard-close {
  display: flex;
  justify-content: flex-end;
  padding: 10px 9px 0 0;
  height: 33px;
}

.wizard-title {
  height: 26px;
  display: flex;
  align-items: center;
  padding-left: 8px;
  font-size: 12px;
  letter-spacing: -0.38px;
}

.wizard-title svg:nth-child(2) {
  margin: 0 5px 0 16px;
}

.wizard-head {
  height: 92px;
  margin: 0 20px 0 38px;
  padding: 43px 0 0 11px;
  border-bottom: 1px solid #999;
}

.wizard-head h3 {
  margin: 0;
  font-size: 10px;
  line-height: 16px;
}

.wizard-head p {
  margin: 3px 0 0 21px;
  line-height: 15px;
  letter-spacing: -0.29px;
}

.wizard-body {
  padding: 0 43px 0 62px;
}

.wizard-body > p {
  margin: 17px 0 0 8px;
  line-height: 15px;
  letter-spacing: -0.25px;
}

fieldset {
  margin: 0;
  padding: 0 22px;
  border: 1px solid #dcdcdc;
}

legend {
  margin-left: -16px;
  padding: 1px 2px 0 2px;
  line-height: 13px;
}

.box-password {
  height: 78px;
  margin-top: 21px;
}

.pw-input {
  width: 267px;
  height: 23px;
  margin-top: 8px;
  border: 1px solid #0078d7;
}

.option {
  display: flex;
  gap: 2px;
  line-height: 13px;
}

.check {
  width: 13px;
  height: 13px;
  margin-top: 1px;
  flex: none;
  border: 1px solid #333;
  background-color: #fff;
}

.box-password .option {
  margin-top: 9px;
}

.box-options {
  height: 171px;
  margin-top: 8px;
}

.box-options .option:nth-of-type(1) {
  margin-top: 11px;
}

.box-options .option:nth-of-type(2),
.box-options .option:nth-of-type(3) {
  margin-top: 15px;
}

.box-options .option:nth-of-type(4) {
  margin-top: 18px;
}

.option.disabled {
  color: #7a7a7a;
}

.disabled .check {
  border-color: #ccc;
}

.wizard-foot {
  height: 41px;
  margin-top: auto;
  padding-right: 11px;
  display: flex;
  align-items: center;
  justify-content: flex-end;
  gap: 9px;
  background-color: #f0f0f0;
  border-top: 1px solid #e3e3e3;
  font-size: 12px;
}

.btn {
  width: 70px;
  height: 21px;
  margin-bottom: 1px;
  line-height: 19px;
  text-align: center;
  border: 1px solid #adadad;
  background-color: #e1e1e1;
}

.btn.primary {
  border-color: #0078d7;
  background-color: #e5f1fb;
}

/* Watermark */
.watermark {
  position: absolute;
  left: 1118px;
  top: 656px;
  width: 200px;
  height: 66px;
  display: flex;
  align-items: center;
  font-family: "Liberation Sans", sans-serif;
  font-size: 46px;
  letter-spacing: 0;
  color: rgba(255, 255, 255, 0.9);
  -webkit-text-stroke: 1px rgba(255, 255, 255, 0.9);
  text-shadow: 0 0 3px rgba(0, 0, 0, 0.4);
}

.watermark span {
  width: 64px;
  transform: scaleX(0.66);
  transform-origin: left;
}

.watermark svg {
  margin: 0 5px 0 8px;
}

/* Taskbar */
.taskbar {
  height: 40px;
  display: flex;
  position: relative;
  background: linear-gradient(90deg, #001a22, #00131d 55%, #000916);
}

.start {
  width: 48px;
  display: flex;
  align-items: center;
  justify-content: center;
}

.task-search {
  width: 288px;
  display: flex;
  align-items: center;
  padding-left: 12px;
  background-color: #f0f0f0;
  border: 1px solid #cfcfcf;
  border-width: 1px 0;
}

.task-search span {
  width: 168px;
  margin-left: 11px;
  font-size: 15px;
  letter-spacing: -0.5px;
  color: #333;
}

.sun {
  margin-left: 10px;
}

.task {
  width: 48px;
  margin-right: 1px;
  display: flex;
  align-items: center;
  justify-content: center;
}

.task-view {
  margin-right: 3px;
}

.task.open {
  background: linear-gradient(#76b9ed, #76b9ed) 4px 38px / 40px 2px no-repeat;
}

.task.current {
  background: linear-gradient(#76b9ed, #76b9ed) 0 38px / 48px 2px no-repeat #39474f;
}

.tray {
  margin-left: auto;
  display: flex;
  align-items: center;
  color: #fff;
}

.tray-meet {
  margin-left: 12px;
}

.tray-sound {
  margin-left: 9px;
}

.tray-net {
  margin-left: 8px;
}

.clock {
  width: 54px;
  margin-left: 8px;
  display: flex;
  flex-direction: column;
  align-items: center;
  line-height: 18px;
  letter-spacing: -0.45px;
}

.action {
  margin-left: 17px;
}

.show-desktop {
  width: 5px;
  height: 40px;
  margin-left: 20px;
  border-left: 1px solid #49545c;
}
```
